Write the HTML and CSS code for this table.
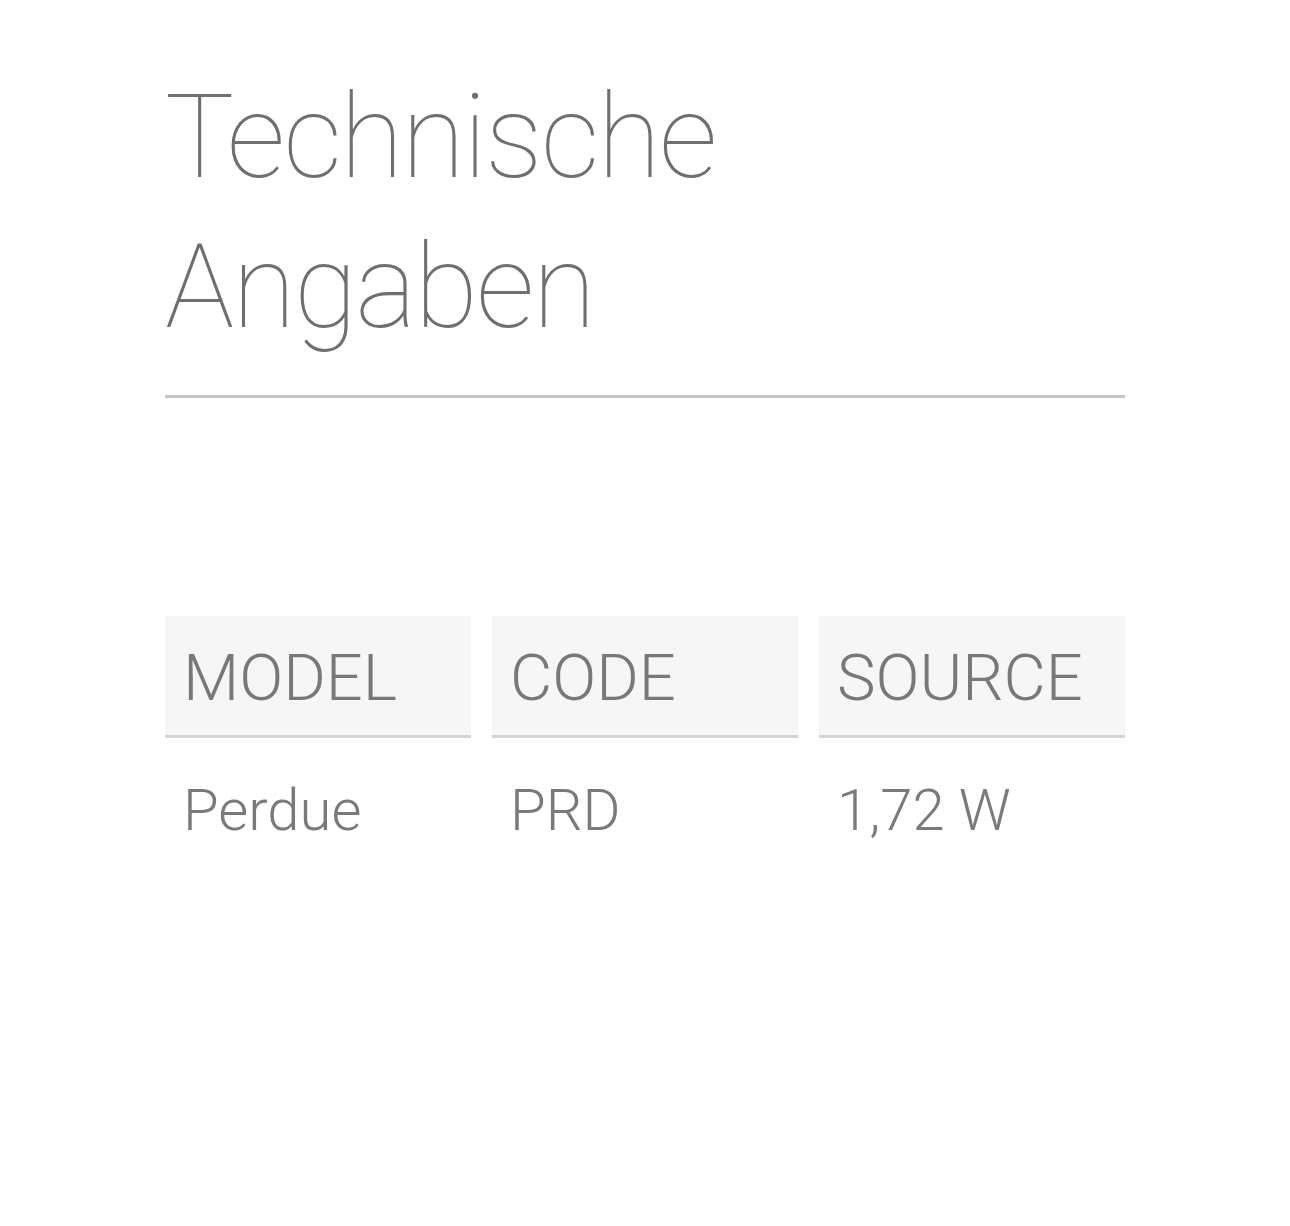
FILE: index.html
```html
<!DOCTYPE html>
<html lang="de">
<head>
<meta charset="utf-8">
<title>Technische Angaben</title>
<link rel="stylesheet" href="styles.css">
</head>
<body>
<main class="page">
  <h1 class="title">Technische<br>Angaben</h1>
  <hr class="rule">
  <div class="specs">
    <div class="col">
      <div class="head">MODEL</div>
      <div class="cell">Perdue</div>
    </div>
    <div class="col">
      <div class="head">CODE</div>
      <div class="cell">PRD</div>
    </div>
    <div class="col">
      <div class="head">SOURCE</div>
      <div class="cell">1,72 W</div>
    </div>
  </div>
</main>
</body>
</html>
```
FILE: styles.css
```css
html, body {
  margin: 0;
  padding: 0;
  background: #ffffff;
}
body {
  font-family: Roboto, "Liberation Sans", sans-serif;
  color: #777777;
}
.page {
  width: 960px;
  margin: 0 auto;
  padding-top: 62px;
}
.title {
  margin: 0;
  font-weight: 100;
  font-size: 116px;
  line-height: 150px;
  color: #6f6f6f;
  letter-spacing: -2px;
}
.rule {
  margin: 33px 0 0 0;
  border: 0;
  height: 3px;
  background: #c6c6c6;
}
.specs {
  margin-top: 218px;
  display: grid;
  grid-template-columns: repeat(3, 1fr);
  column-gap: 21px;
}
.head {
  background: #f6f6f6;
  border-bottom: 3px solid #d4d4d4;
  height: 122px;
  box-sizing: border-box;
  padding: 4px 0 0 18px;
  display: flex;
  align-items: center;
  font-size: 65px;
  font-weight: 300;
  color: #787878;
}
.cell {
  padding: 38px 0 0 18px;
  font-size: 58px;
  font-weight: 300;
  color: #7a7a7a;
}
```
